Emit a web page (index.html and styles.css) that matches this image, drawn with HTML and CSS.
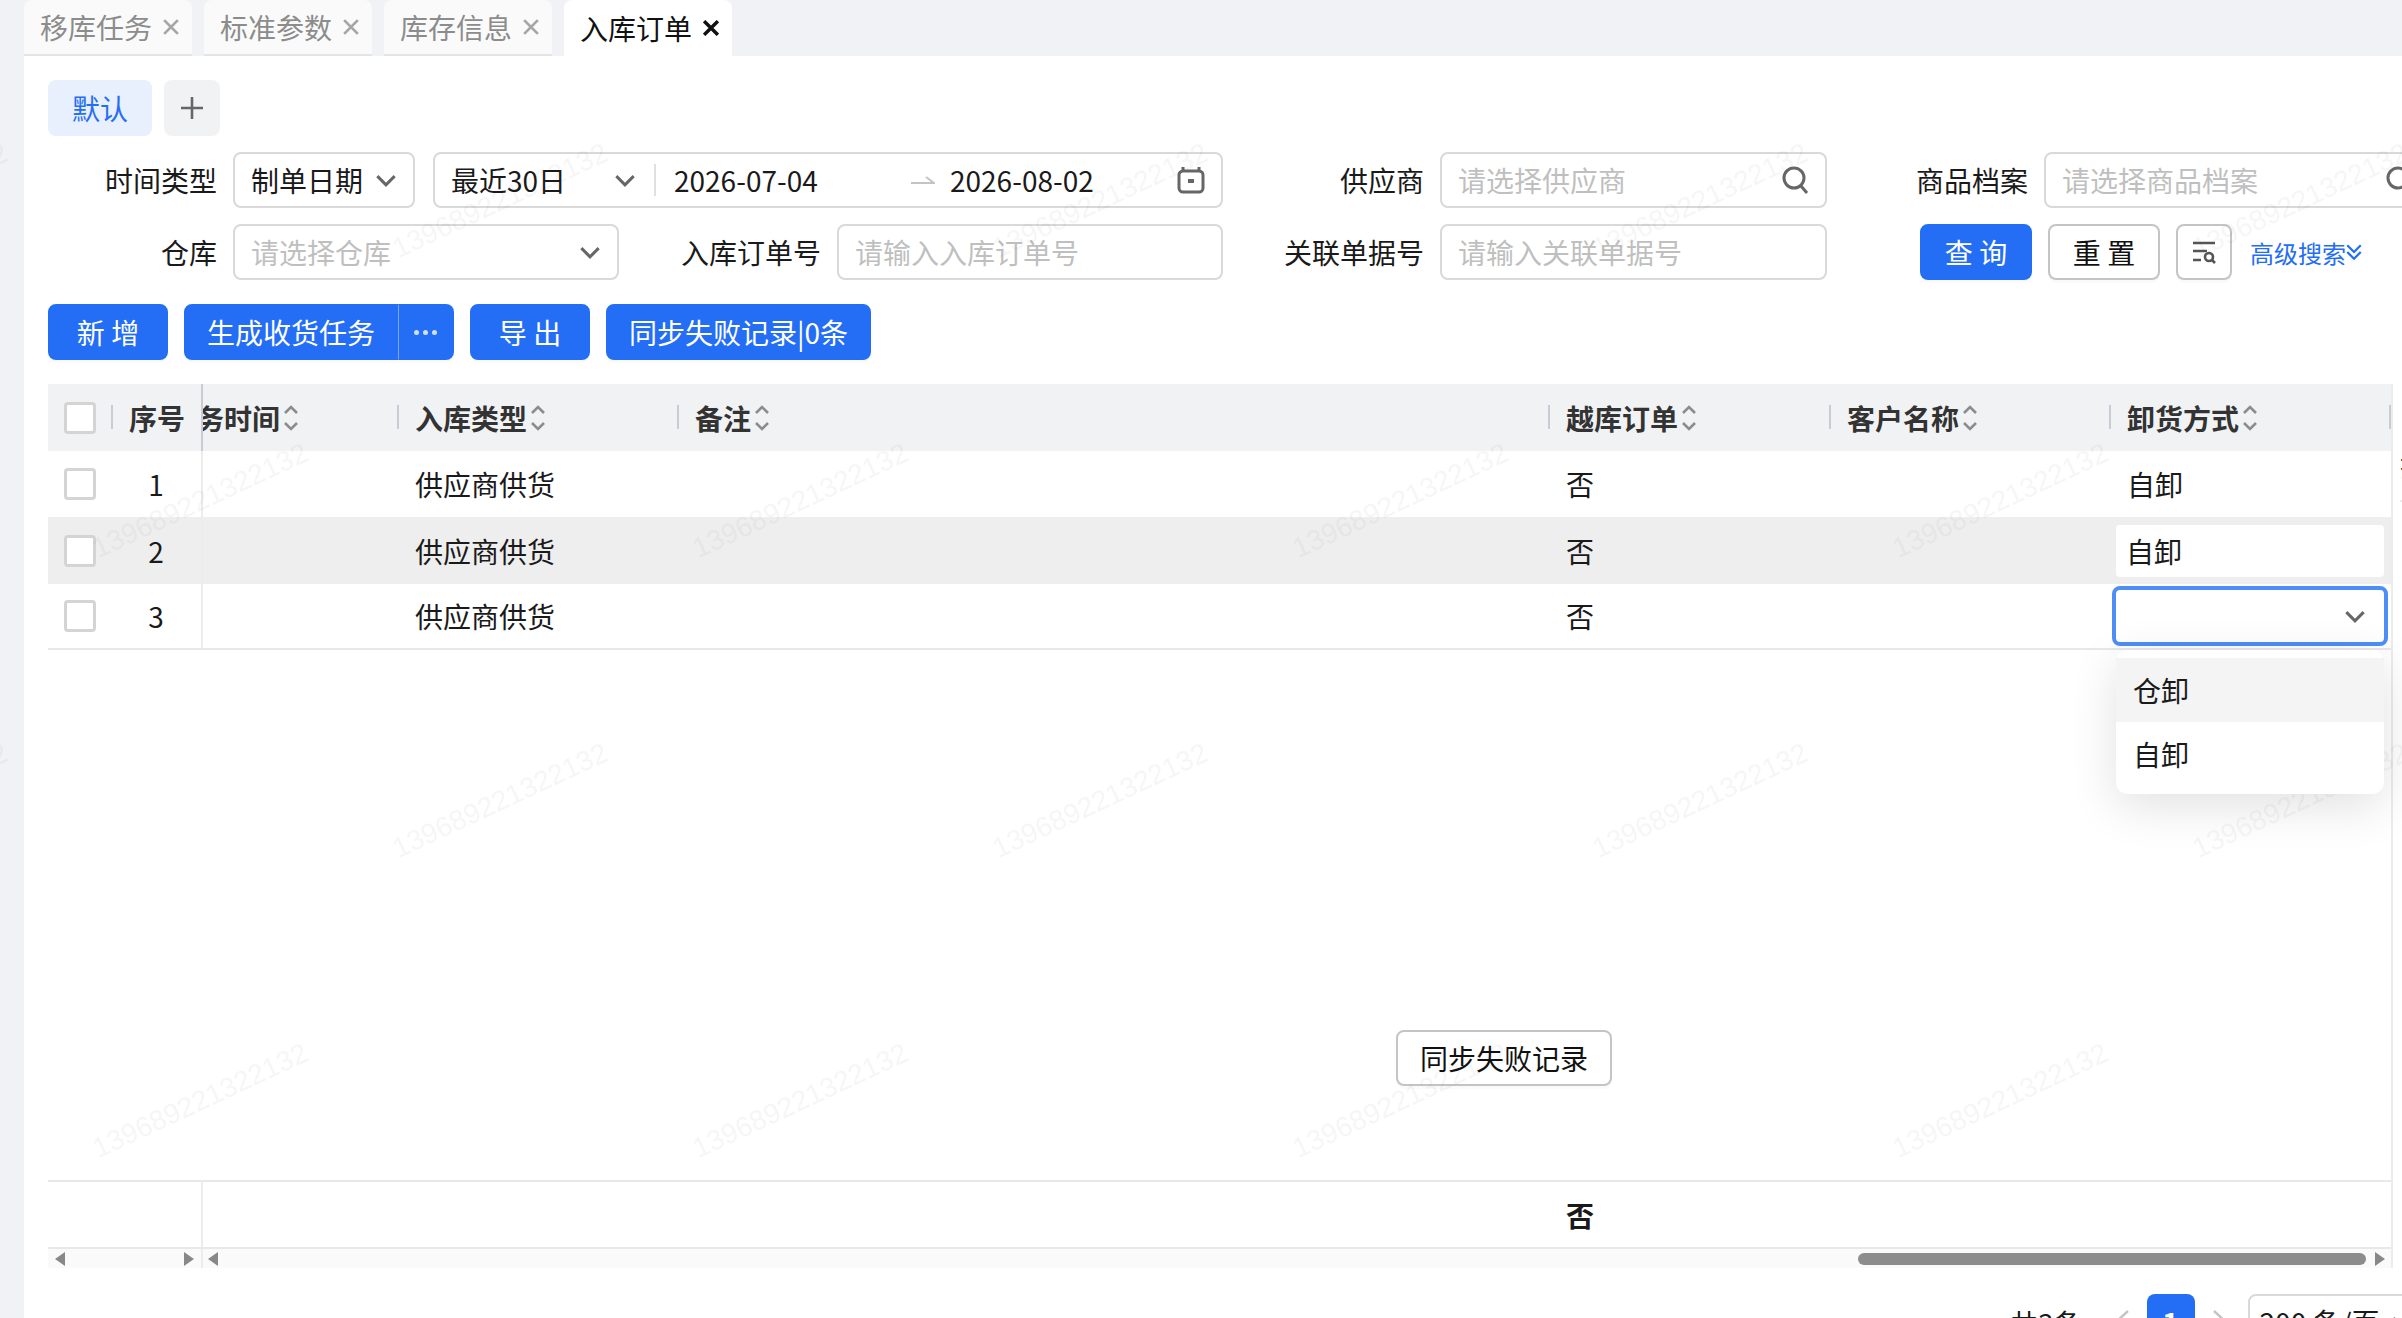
FILE: index.html
```html
<!DOCTYPE html>
<html lang="zh-CN">
<head>
    <meta charset="UTF-8">
    <title>入库订单</title>
    <link rel="stylesheet" href="styles.css">
</head>
<body>
    <div class="page">
        <div class="tabs">
            <div class="tab">移库任务<svg class="tab-close" viewBox="0 0 14 14"><path d="M1 1l12 12M13 1L1 13"/></svg></div>
            <div class="tab">标准参数<svg class="tab-close" viewBox="0 0 14 14"><path d="M1 1l12 12M13 1L1 13"/></svg></div>
            <div class="tab">库存信息<svg class="tab-close" viewBox="0 0 14 14"><path d="M1 1l12 12M13 1L1 13"/></svg></div>
            <div class="tab active">入库订单<svg class="tab-close" viewBox="0 0 14 14"><path d="M1 1l12 12M13 1L1 13"/></svg></div>
        </div>

        <div class="content">
            <div class="views">
                <div class="view-tab">默认</div>
                <div class="view-add"><svg width="24" height="24" viewBox="0 0 24 24"><path d="M12 1v22M1 12h22"/></svg></div>
            </div>

            <div class="search-form">
                <div class="label">时间类型</div>
                <div class="date-group">
                    <div class="input type-select">制单日期<svg class="chevron" viewBox="0 0 20 12"><path d="M2 2l8 8 8-8"/></svg></div>
                    <div class="input range">
                        <div class="range-preset">最近30日<svg class="chevron" viewBox="0 0 20 12"><path d="M2 2l8 8 8-8"/></svg></div>
                        <div class="range-date">2026-07-04</div>
                        <svg class="range-arrow" viewBox="0 0 24 10"><path d="M0 8h23L15 2"/></svg>
                        <div class="range-date">2026-08-02</div>
                        <svg class="calendar" viewBox="0 0 28 28"><path d="M6 1v5M22 1v5"/><rect x="2" y="5" width="24" height="21" rx="4"/><path d="M11 15h6" class="dot"/></svg>
                    </div>
                </div>
                <div class="label">供应商</div>
                <div class="input placeholder">请选择供应商<svg class="search" viewBox="0 0 28 28"><circle cx="13" cy="12" r="10"/><path d="M20 20l6 7"/></svg></div>
                <div class="label">商品档案</div>
                <div class="input placeholder">请选择商品档案<svg class="search" viewBox="0 0 28 28"><circle cx="13" cy="12" r="10"/><path d="M20 20l6 7"/></svg></div>

                <div class="label">仓库</div>
                <div class="input placeholder">请选择仓库<svg class="chevron" viewBox="0 0 20 12"><path d="M2 2l8 8 8-8"/></svg></div>
                <div class="label">入库订单号</div>
                <div class="input placeholder">请输入入库订单号</div>
                <div class="label">关联单据号</div>
                <div class="input placeholder">请输入关联单据号</div>
                <div class="form-actions">
                    <button class="btn primary query">查 询</button>
                    <button class="btn reset">重 置</button>
                    <button class="btn filter"><svg width="24" height="24" viewBox="0 0 24 24"><path d="M1 3h22M1 11h14M1 20h8"/><circle cx="17" cy="17" r="4"/><path d="M20 20l3 3"/></svg></button>
                    <a class="advanced">高级搜索<svg width="16" height="18" viewBox="0 0 14 16"><path d="M1 2l6 6 6-6M1 8l6 6 6-6"/></svg></a>
                </div>
            </div>

            <div class="toolbar">
                <button class="btn primary add">新 增</button>
                <div class="btn-group">
                    <button class="btn primary task">生成收货任务</button>
                    <button class="btn primary more"><span></span><span></span><span></span></button>
                </div>
                <button class="btn primary add">导 出</button>
                <button class="btn primary sync">同步失败记录|0条</button>
            </div>

            <div class="table-area">
                <div class="table">
                    <div class="row head">
                        <div class="cell col-check"><span class="checkbox"></span></div>
                        <div class="cell col-no"><span class="sep"></span><span class="no-title">序号</span></div>
                        <div class="cell col-time"><span class="time-title">任务时间</span><svg class="sort" viewBox="0 0 14 26"><path d="M1 8l6-6 6 6M1 18l6 6 6-6"/></svg></div>
                        <div class="cell"><span class="sep"></span>入库类型<svg class="sort" viewBox="0 0 14 26"><path d="M1 8l6-6 6 6M1 18l6 6 6-6"/></svg></div>
                        <div class="cell"><span class="sep"></span>备注<svg class="sort" viewBox="0 0 14 26"><path d="M1 8l6-6 6 6M1 18l6 6 6-6"/></svg></div>
                        <div class="cell"><span class="sep"></span>越库订单<svg class="sort" viewBox="0 0 14 26"><path d="M1 8l6-6 6 6M1 18l6 6 6-6"/></svg></div>
                        <div class="cell"><span class="sep"></span>客户名称<svg class="sort" viewBox="0 0 14 26"><path d="M1 8l6-6 6 6M1 18l6 6 6-6"/></svg></div>
                        <div class="cell"><span class="sep"></span>卸货方式<svg class="sort" viewBox="0 0 14 26"><path d="M1 8l6-6 6 6M1 18l6 6 6-6"/></svg></div>
                        <div class="cell col-end"><span class="sep"></span></div>
                    </div>
                    <div class="row">
                        <div class="cell col-check"><span class="checkbox"></span></div>
                        <div class="cell col-no">1</div>
                        <div class="cell col-time"></div>
                        <div class="cell">供应商供货</div>
                        <div class="cell"></div>
                        <div class="cell">否</div>
                        <div class="cell"></div>
                        <div class="cell">自卸</div>
                    </div>
                    <div class="row hovered">
                        <div class="cell col-check"><span class="checkbox"></span></div>
                        <div class="cell col-no">2</div>
                        <div class="cell col-time"></div>
                        <div class="cell">供应商供货</div>
                        <div class="cell"></div>
                        <div class="cell">否</div>
                        <div class="cell"></div>
                        <div class="cell"><div class="cell-edit">自卸</div></div>
                    </div>
                    <div class="row last">
                        <div class="cell col-check"><span class="checkbox"></span></div>
                        <div class="cell col-no">3</div>
                        <div class="cell col-time"></div>
                        <div class="cell">供应商供货</div>
                        <div class="cell"></div>
                        <div class="cell">否</div>
                        <div class="cell"></div>
                        <div class="cell cell-open">
                            <div class="cell-select"><svg class="chevron" viewBox="0 0 20 12"><path d="M2 2l8 8 8-8"/></svg></div>
                            <div class="dropdown">
                                <div class="option on">仓卸</div>
                                <div class="option">自卸</div>
                            </div>
                        </div>
                    </div>

                    <div class="table-empty">
                        <button class="btn float-btn">同步失败记录</button>
                    </div>

                    <div class="row summary">
                        <div class="cell col-check"></div>
                        <div class="cell col-no"></div>
                        <div class="cell col-time"></div>
                        <div class="cell"></div>
                        <div class="cell"></div>
                        <div class="cell">否</div>
                        <div class="cell"></div>
                        <div class="cell"></div>
                    </div>

                    <div class="scrollbars">
                        <div class="track fixed-track">
                            <svg class="arrow" viewBox="0 0 10 14"><path d="M10 0v14L0 7z"/></svg>
                            <svg class="arrow" viewBox="0 0 10 14"><path d="M0 0v14l10-7z"/></svg>
                        </div>
                        <div class="track main-track">
                            <svg class="arrow" viewBox="0 0 10 14"><path d="M10 0v14L0 7z"/></svg>
                            <div class="thumb"></div>
                            <svg class="arrow" viewBox="0 0 10 14"><path d="M0 0v14l10-7z"/></svg>
                        </div>
                    </div>
                </div>
                <div class="table-edge"><div class="edge-cell">操作</div></div>
            </div>

            <div class="pager">
                <span class="total">共3条</span>
                <svg class="page-arrow" viewBox="0 0 14 24"><path d="M13 1L1 12l12 11"/></svg>
                <div class="page-num">1</div>
                <svg class="page-arrow" viewBox="0 0 14 24"><path d="M1 1l12 11L1 23"/></svg>
                <div class="page-size">200 条/页<svg class="chevron" viewBox="0 0 20 12"><path d="M2 2l8 8 8-8"/></svg></div>
            </div>
        </div>

        <svg class="watermark" width="2402" height="1318">
            <defs>
                <pattern id="wm" x="50" y="0" width="600" height="600" patternUnits="userSpaceOnUse">
                    <text x="150" y="510" transform="rotate(-25 150 500)">139689221322132</text>
                    <text x="450" y="210" transform="rotate(-25 450 200)">139689221322132</text>
                </pattern>
            </defs>
            <rect width="2402" height="1318" fill="url(#wm)"/>
        </svg>
    </div>
</body>
</html>
```

FILE: styles.css
```css
* {
    box-sizing: border-box;
}
html, body {
    margin: 0;
    height: 100%;
    overflow: hidden;
}
body {
    font-family: "Noto Sans CJK SC", "Noto Sans", sans-serif;
    font-size: 28px;
    color: #1a1a1a;
}
.page {
    position: relative;
    width: 2402px;
    height: 1318px;
    overflow: hidden;
    padding-left: 24px;
    background-color: #f0f2f5;
}

/* tabs */
.tabs {
    display: flex;
    gap: 12px;
    height: 56px;
}
.tab {
    display: flex;
    align-items: center;
    justify-content: space-between;
    width: 168px;
    padding: 0 13px 0 16px;
    background-color: #fafafa;
    border-bottom: 2px solid #e4e4e4;
    border-radius: 8px 8px 0 0;
    color: #8c8c8c;
}
.tab.active {
    background-color: #fff;
    border-bottom: none;
    color: #111;
}
.tab-close {
    width: 16px;
    height: 16px;
    flex: none;
    fill: none;
    stroke: #a6a6a6;
    stroke-width: 2.4;
}
.tab.active .tab-close {
    stroke: #111;
    stroke-width: 3;
}

.content {
    height: 1262px;
    padding: 24px 0 0 24px;
    background-color: #fff;
}

/* saved views */
.views {
    display: flex;
    gap: 12px;
}
.view-tab {
    display: flex;
    align-items: center;
    justify-content: center;
    width: 104px;
    height: 56px;
    background-color: #e8effd;
    border-radius: 8px;
    color: #246ef5;
}
.view-add {
    display: flex;
    align-items: center;
    justify-content: center;
    width: 56px;
    height: 56px;
    background-color: #f1f2f4;
    border-radius: 8px;
}
.view-add path {
    stroke: #666;
    stroke-width: 2.6;
}

/* search form */
.search-form {
    display: grid;
    grid-template-columns: 167px 386px 182px 386px 181px 387px 181px 387px;
    column-gap: 18px;
    row-gap: 16px;
    grid-auto-rows: 56px;
    margin-top: 16px;
    width: 2500px;
}
.label {
    display: flex;
    align-items: center;
    justify-content: flex-end;
    margin-right: -2px;
    white-space: nowrap;
}
.date-group {
    grid-column: span 3;
    display: flex;
    gap: 18px;
}
.input {
    display: flex;
    align-items: center;
    justify-content: space-between;
    height: 56px;
    padding: 0 16px;
    background-color: #fff;
    border: 2px solid #d9d9d9;
    border-radius: 8px;
    white-space: nowrap;
}
.placeholder {
    color: #bfbfbf;
}
.type-select {
    width: 182px;
    flex: none;
}
.range {
    flex: 1;
    justify-content: flex-start;
}
.range-preset {
    display: flex;
    align-items: center;
    justify-content: space-between;
    width: 205px;
    height: 32px;
    padding-right: 18px;
    margin-right: 18px;
    border-right: 2px solid #e0e0e0;
}
.range-date {
    width: 144px;
}
.range-arrow {
    width: 24px;
    height: 10px;
    margin: 0 15px 0 93px;
    fill: none;
    stroke: #c4c4c4;
    stroke-width: 2;
}
.calendar {
    width: 28px;
    height: 28px;
    margin-left: auto;
    fill: none;
    stroke: #666;
    stroke-width: 3;
}
.calendar .dot {
    stroke-width: 4;
    stroke-dasharray: 6;
}
.chevron {
    width: 22px;
    height: 13px;
    flex: none;
    fill: none;
    stroke: #666;
    stroke-width: 2.8;
}
.search {
    width: 28px;
    height: 28px;
    flex: none;
    fill: none;
    stroke: #666;
    stroke-width: 3;
}
.form-actions {
    grid-column: span 2;
    display: flex;
    align-items: center;
    margin-left: 75px;
}

/* buttons */
.btn {
    display: flex;
    align-items: center;
    justify-content: center;
    height: 56px;
    padding: 0;
    background-color: #fff;
    border: 2px solid #c4c4c4;
    border-radius: 8px;
    font-family: inherit;
    font-size: 28px;
    color: #111;
    box-shadow: 0 3px 0 rgba(0, 0, 0, 0.02);
}
.btn.primary {
    background-color: #246ef5;
    border-color: #246ef5;
    color: #fff;
}
.query {
    width: 112px;
}
.reset {
    width: 112px;
    margin-left: 16px;
}
.filter {
    width: 56px;
    margin-left: 16px;
}
.filter svg {
    fill: none;
    stroke: #555;
    stroke-width: 2.6;
}
.advanced {
    display: flex;
    align-items: center;
    margin-left: 18px;
    font-size: 24px;
    color: #246ef5;
    white-space: nowrap;
}
.advanced svg {
    fill: none;
    stroke: #246ef5;
    stroke-width: 2;
}

/* toolbar */
.toolbar {
    display: flex;
    gap: 16px;
    margin-top: 24px;
}
.add {
    width: 120px;
}
.btn-group {
    display: flex;
}
.task {
    width: 214px;
    border-radius: 8px 0 0 8px;
}
.btn.primary.more {
    gap: 4px;
    width: 56px;
    border-left: 1px solid #7ba6f8;
    border-radius: 0 8px 8px 0;
}
.more span {
    width: 5px;
    height: 5px;
    background-color: #cfe0fd;
    border-radius: 50%;
}
.sync {
    width: 265px;
}

/* table */
.table-area {
    display: flex;
    margin-top: 24px;
}
.table {
    position: relative;
    display: flex;
    flex-direction: column;
    width: 2343px;
    height: 884px;
    flex: none;
}
.table-edge {
    width: 12px;
    height: 884px;
    flex: none;
    overflow: hidden;
    padding: 66px 0 0 7px;
    border-left: 2px solid #ececec;
}
.edge-cell {
    width: 60px;
    height: 52px;
    white-space: nowrap;
    line-height: 30px;
    border-bottom: 2px solid #ececec;
}
.row {
    display: grid;
    grid-template-columns: 63px 90px 196px 280px 871px 281px 280px 280px 2px;
    height: 66px;
    flex: none;
}
.row.head {
    height: 67px;
    background-color: #f1f2f4;
    font-weight: 700;
    color: #333;
}
.row.hovered {
    height: 67px;
    background-color: #eeeeee;
}
.row.last {
    border-bottom: 2px solid #e8e8e8;
}
.cell {
    display: flex;
    align-items: center;
    padding-left: 18px;
    white-space: nowrap;
    min-width: 0;
}
.head .cell {
    position: relative;
    overflow: hidden;
}
.cell.col-end {
    padding: 0;
}
.sep {
    position: absolute;
    left: 0;
    top: 21px;
    width: 2px;
    height: 24px;
    background-color: #c9ccd4;
}
.cell.col-check {
    padding-left: 16px;
}
.cell.col-no {
    justify-content: center;
    padding-left: 0;
}
.no-title {
    margin-left: 2px;
}
.col-time {
    border-left: 2px solid #ececec;
}
.head .cell.col-time {
    border-left-color: #c9ccd4;
    padding-left: 0;
}
.time-title {
    margin-left: -35px;
}
.sort {
    width: 14px;
    height: 26px;
    margin-left: 4px;
    flex: none;
    fill: none;
    stroke: #8c8c8c;
    stroke-width: 2.6;
}
.checkbox {
    width: 32px;
    height: 32px;
    background-color: #fff;
    border: 3px solid #d4d4d4;
    border-radius: 4px;
}
.cell-edit {
    display: flex;
    align-items: center;
    width: 268px;
    height: 52px;
    margin-left: -11px;
    padding-left: 10px;
    background-color: #fff;
    border-radius: 4px;
}
.cell-open {
    position: relative;
}
.cell-select {
    display: flex;
    align-items: center;
    justify-content: flex-end;
    width: 276px;
    height: 60px;
    margin: 0 0 0 -15px;
    padding-right: 18px;
    background-color: #fff;
    border: 4px solid #4d8ef7;
    border-radius: 8px;
}
.dropdown {
    position: absolute;
    z-index: 5;
    left: 7px;
    top: 66px;
    width: 268px;
    padding: 8px 0;
    background-color: #fff;
    border-radius: 12px;
    box-shadow: 0 12px 48px rgba(0, 0, 0, 0.12);
}
.option {
    display: flex;
    align-items: center;
    height: 64px;
    padding-left: 17px;
}
.option.on {
    background-color: #f4f4f4;
}
.table-empty {
    position: relative;
    flex: 1;
}
.float-btn {
    position: absolute;
    left: 1348px;
    top: 380px;
    width: 216px;
    height: 56px;
}
.row.summary {
    height: 67px;
    border-top: 2px solid #e8e8e8;
    font-weight: 700;
}
.scrollbars {
    display: flex;
    height: 21px;
    flex: none;
    border-top: 2px solid #e8e8e8;
}
.track {
    display: flex;
    align-items: center;
    background-color: #fafafa;
}
.fixed-track {
    justify-content: space-between;
    width: 153px;
    padding: 0 7px;
}
.main-track {
    flex: 1;
    padding: 0 6px 0 5px;
    border-left: 2px solid #ececec;
}
.arrow {
    width: 10px;
    height: 14px;
    flex: none;
    fill: #888;
}
.thumb {
    width: 508px;
    height: 12px;
    margin: 0 9px 0 auto;
    background-color: #8c8c8c;
    border-radius: 6px;
}

/* pagination */
.pager {
    display: flex;
    align-items: flex-start;
    width: 500px;
    margin: 26px 0 0 1962px;
    white-space: nowrap;
}
.pager > * {
    flex: none;
}
.total {
    margin-top: 9px;
}
.page-arrow {
    width: 14px;
    height: 24px;
    margin-top: 16px;
    fill: none;
    stroke: #c4c4c4;
    stroke-width: 2.4;
}
.total + .page-arrow {
    margin-left: 33px;
}
.page-num {
    display: flex;
    align-items: center;
    justify-content: center;
    width: 48px;
    height: 56px;
    margin: 0 18px;
    background-color: #246ef5;
    border-radius: 8px;
    font-weight: 700;
    color: #fff;
}
.page-size {
    display: flex;
    align-items: center;
    gap: 12px;
    width: 220px;
    height: 56px;
    margin-left: 21px;
    padding-left: 10px;
    border: 2px solid #d9d9d9;
    border-radius: 8px;
}

/* watermark */
.watermark {
    position: absolute;
    left: 0;
    top: 0;
    pointer-events: none;
}
.watermark text {
    font-family: "Liberation Sans", sans-serif;
    font-size: 28px;
    text-anchor: middle;
    fill: rgba(0, 0, 0, 0.035);
}
```
